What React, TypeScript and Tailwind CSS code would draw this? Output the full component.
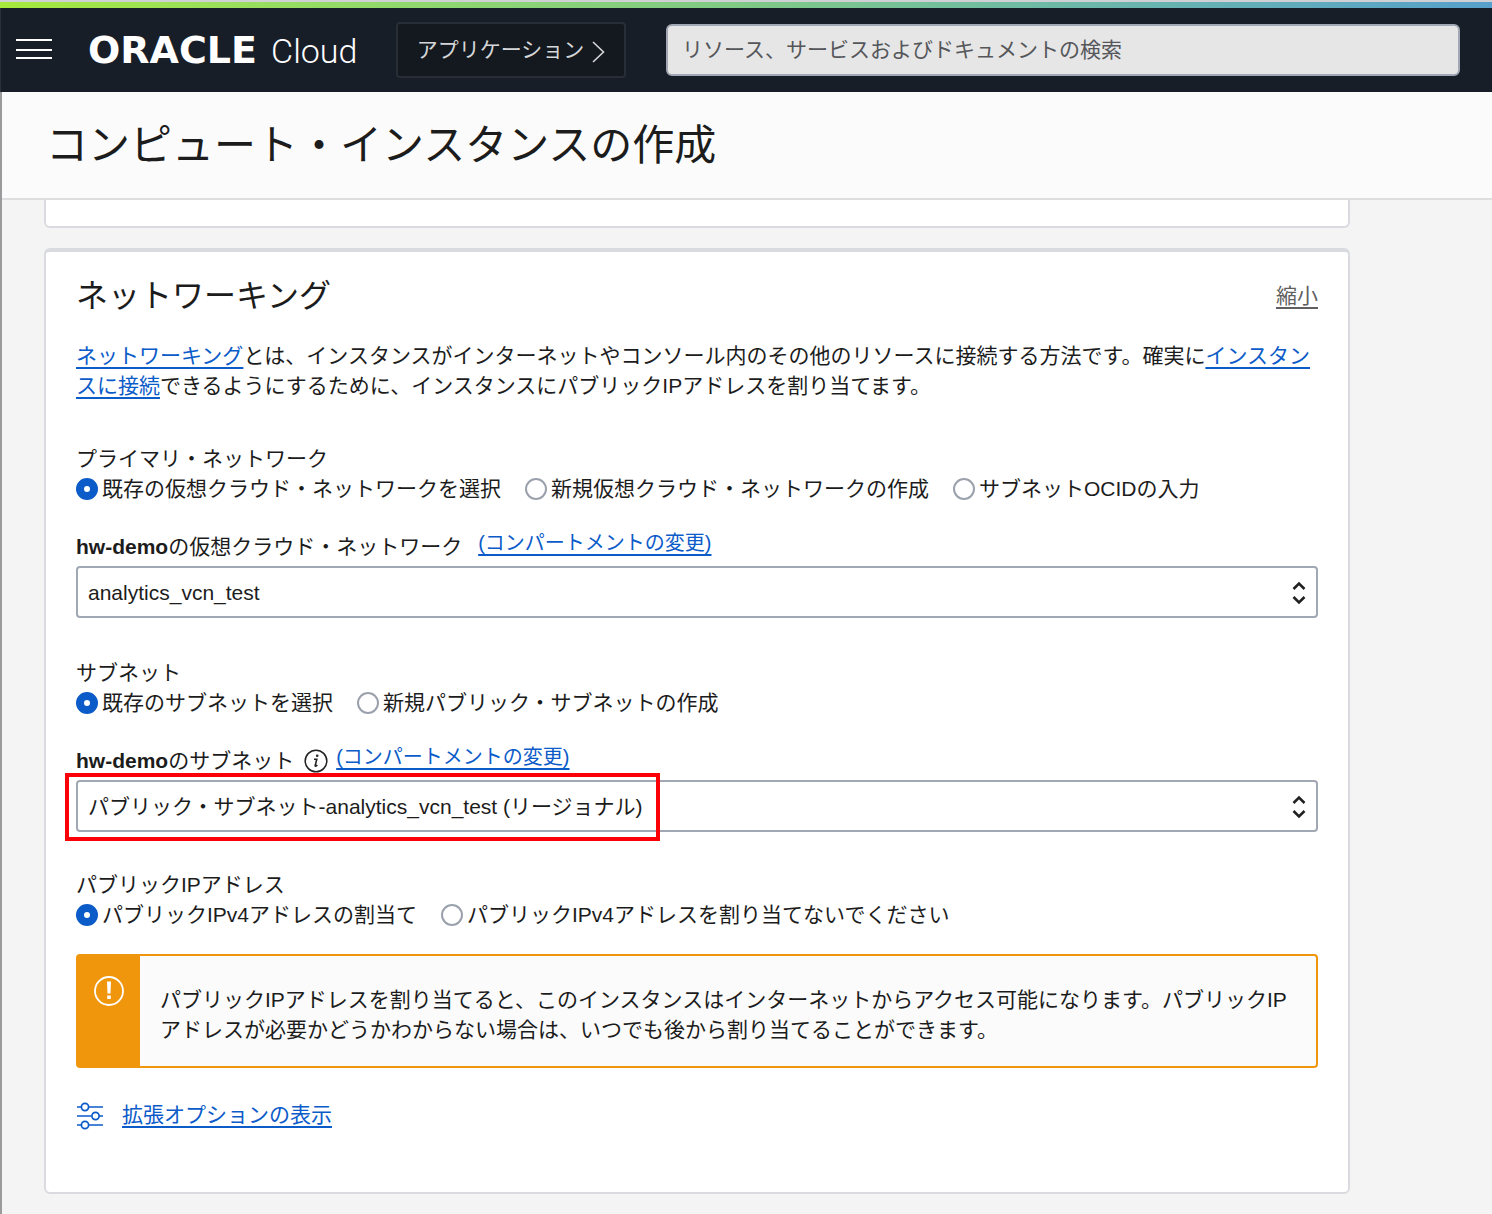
import { useState, type ReactNode } from "react";

function Header() {
  return (
    <header>
      <div className="h-0.5 bg-[#d0d1d4]" />
      <div className="h-1.5 bg-linear-to-r from-[#a5e93b] via-[#7fc986] to-[#57a0cb]" />
      <div className="flex h-[84px] items-center border-l border-[#2b313a] bg-[#171e27] pr-8 pl-[15px]">
        <button type="button" aria-label="メニュー" className="shrink-0">
          <svg width="36" height="22" viewBox="0 0 36 22" fill="white" className="block">
            <path d="M0 0h36v2H0zM0 10h36v2H0zM0 18h36v2H0z" />
          </svg>
        </button>
        <a
          href="#home"
          aria-label="ORACLE Cloud"
          className="ml-9 flex w-[268px] shrink-0 items-baseline gap-3.5 text-white"
        >
          <span className="font-['DejaVu_Sans'] text-[38px] leading-10 font-bold">ORACLE</span>
          <span className="font-['Roboto'] text-[34px] leading-10 font-light">Cloud</span>
        </a>
        <button
          type="button"
          className="ml-10 flex h-14 w-[230px] shrink-0 items-center justify-center gap-2 rounded-sm border-2 border-[#282d36] bg-[#14181f] text-[21px] whitespace-nowrap text-[#d5d6d8]"
        >
          アプリケーション
          <svg width="13" height="22" viewBox="0 0 13 22" fill="none" stroke="currentColor" strokeWidth="1.6" className="mt-1">
            <path d="M1 1l10.5 10L1 21" />
          </svg>
        </button>
        <input
          type="search"
          aria-label="検索"
          placeholder="リソース、サービスおよびドキュメントの検索"
          className="ml-10 h-[52px] min-w-0 flex-1 rounded-md border-2 border-[#a2a8b3] bg-[#e6e6e6] px-3.5 text-[21px] text-[#222] outline-none placeholder:text-[#55565a]"
        />
      </div>
    </header>
  );
}

function TextLink({ children }: { children: ReactNode }) {
  return (
    <a href="#link" className="text-[#0b5bc9] underline decoration-2 underline-offset-4">
      {children}
    </a>
  );
}

function RadioGroup({ legend, name, options }: { legend: string; name: string; options: string[] }) {
  const [selected, setSelected] = useState(0);
  return (
    <fieldset>
      <legend className="block h-[30px]">{legend}</legend>
      <div className="flex flex-wrap gap-x-6">
        {options.map((option, index) => (
          <label key={option} className="flex items-center gap-1">
            <input
              type="radio"
              name={name}
              checked={selected === index}
              onChange={() => setSelected(index)}
              className="size-[22px] shrink-0 appearance-none rounded-full border-2 border-[#9ba1ac] bg-white checked:border-[8px] checked:border-[#0b5bc9]"
            />
            {option}
          </label>
        ))}
      </div>
    </fieldset>
  );
}

function SelectBox({ id, value }: { id: string; value: string }) {
  return (
    <div className="relative">
      <select
        id={id}
        className="block h-[52px] w-full appearance-none rounded-sm border-2 border-[#a2a8b3] bg-white px-2.5 pt-0.5 text-[#1c1c1c]"
      >
        <option>{value}</option>
      </select>
      <svg
        width="14"
        height="24"
        viewBox="0 0 14 24"
        fill="none"
        stroke="#222"
        strokeWidth="2.6"
        className="pointer-events-none absolute top-[15px] right-3"
      >
        <path d="M1.5 8L7 2.5 12.5 8M1.5 16L7 21.5 12.5 16" />
      </svg>
    </div>
  );
}

function InfoIcon() {
  return (
    <svg width="24" height="24" viewBox="0 0 24 24" fill="none" stroke="#222" className="block">
      <circle cx="12" cy="12" r="10.8" strokeWidth="1.5" />
      <path d="M10 10.3h2.8l-1.6 6.2c-.2 1 .8.9 2.2-.5" strokeWidth="1.6" />
      <circle cx="13.2" cy="6.8" r="1.3" fill="#222" stroke="none" />
    </svg>
  );
}

function SlidersIcon() {
  return (
    <svg width="28" height="28" viewBox="0 0 28 28" fill="none" stroke="#0b5bc9" strokeWidth="1.7" className="mt-0.5 block">
      <path d="M1 5h4M13 5h14M1 14h14M23 14h4M1 23h4M13 23h14" />
      <circle cx="9" cy="5" r="3.6" />
      <circle cx="19.5" cy="14" r="3.6" />
      <circle cx="9" cy="23" r="3.6" />
    </svg>
  );
}

export default function App() {
  return (
    <div className="min-h-screen bg-[#f4f4f4] font-['Liberation_Sans','Noto_Sans_CJK_JP',sans-serif] text-[21px] leading-[30px] text-[#1c1c1c]">
      <Header />
      <div className="min-h-[calc(100vh-92px)] border-l-2 border-[#9b9b9d]">
        <div className="border-b-2 border-[#dddee0] bg-[#fbfbfb] px-11 pt-[30px] pb-7">
          <h1 className="text-[42px] leading-[48px]">コンピュート・インスタンスの作成</h1>
        </div>

        <main className="mr-10 ml-[42px] max-w-[1306px] pb-5">
          <div className="h-7 rounded-b-md border-2 border-t-0 border-[#d9dbe0] bg-white" />

          <section className="mt-5 rounded-md border-2 border-t-4 border-[#d9dbe0] bg-white px-[30px] pb-[62px]">
            <div className="flex items-center justify-between pt-5">
              <h2 className="text-[32px] leading-[48px]">ネットワーキング</h2>
              <button type="button" className="text-[#5f5f5f] underline decoration-2 underline-offset-4">
                縮小
              </button>
            </div>

            <p className="mt-[21px]">
              <TextLink>ネットワーキング</TextLink>
              とは、インスタンスがインターネットやコンソール内のその他のリソースに接続する方法です。確実に
              <TextLink>インスタンスに接続</TextLink>
              できるようにするために、インスタンスにパブリックIPアドレスを割り当てます。
            </p>

            <div className="mt-[43px]">
              <RadioGroup
                legend="プライマリ・ネットワーク"
                name="network"
                options={["既存の仮想クラウド・ネットワークを選択", "新規仮想クラウド・ネットワークの作成", "サブネットOCIDの入力"]}
              />
              <div className="mt-6 mb-1 flex items-start gap-4">
                <label htmlFor="vcn" className="pt-1">
                  <b>hw-demo</b>の仮想クラウド・ネットワーク
                </label>
                <div className="text-xl leading-[30px]">
                  <TextLink>(コンパートメントの変更)</TextLink>
                </div>
              </div>
              <SelectBox id="vcn" value="analytics_vcn_test" />
            </div>

            <div className="mt-10">
              <RadioGroup
                legend="サブネット"
                name="subnet"
                options={["既存のサブネットを選択", "新規パブリック・サブネットの作成"]}
              />
              <div className="mt-6 mb-1 flex items-start">
                <label htmlFor="subnet-select" className="pt-1">
                  <b>hw-demo</b>のサブネット
                </label>
                <button type="button" aria-label="情報" className="mt-[7px] mr-2 ml-2.5">
                  <InfoIcon />
                </button>
                <div className="text-xl leading-[30px]">
                  <TextLink>(コンパートメントの変更)</TextLink>
                </div>
              </div>
              <div className="relative">
                <SelectBox id="subnet-select" value="パブリック・サブネット-analytics_vcn_test (リージョナル)" />
                <div className="pointer-events-none absolute -top-[7px] -left-[11px] h-[68px] w-[595px] border-4 border-[#fb0007]" />
              </div>
            </div>

            <div className="mt-[38px]">
              <RadioGroup
                legend="パブリックIPアドレス"
                name="public-ip"
                options={["パブリックIPv4アドレスの割当て", "パブリックIPv4アドレスを割り当てないでください"]}
              />
            </div>

            <div role="alert" className="mt-6 flex rounded-sm border-2 border-[#f0960c] bg-[#fbfbfb]">
              <div className="w-[62px] shrink-0 bg-[#f0960c] pt-5 pl-4">
                <svg width="30" height="30" viewBox="0 0 30 30" fill="none" className="block">
                  <circle cx="15" cy="15" r="14" stroke="white" strokeWidth="1.8" />
                  <path d="M13 5.5h4l-.5 12h-3zM13.2 19.5h3.6v3.5h-3.6z" fill="white" />
                </svg>
              </div>
              <p className="pt-[29px] pr-7 pb-[21px] pl-5">
                パブリックIPアドレスを割り当てると、このインスタンスはインターネットからアクセス可能になります。パブリックIPアドレスが必要かどうかわからない場合は、いつでも後から割り当てることができます。
              </p>
            </div>

            <div className="mt-8 flex items-center gap-[18px]">
              <SlidersIcon />
              <TextLink>拡張オプションの表示</TextLink>
            </div>
          </section>
        </main>
      </div>
    </div>
  );
}
